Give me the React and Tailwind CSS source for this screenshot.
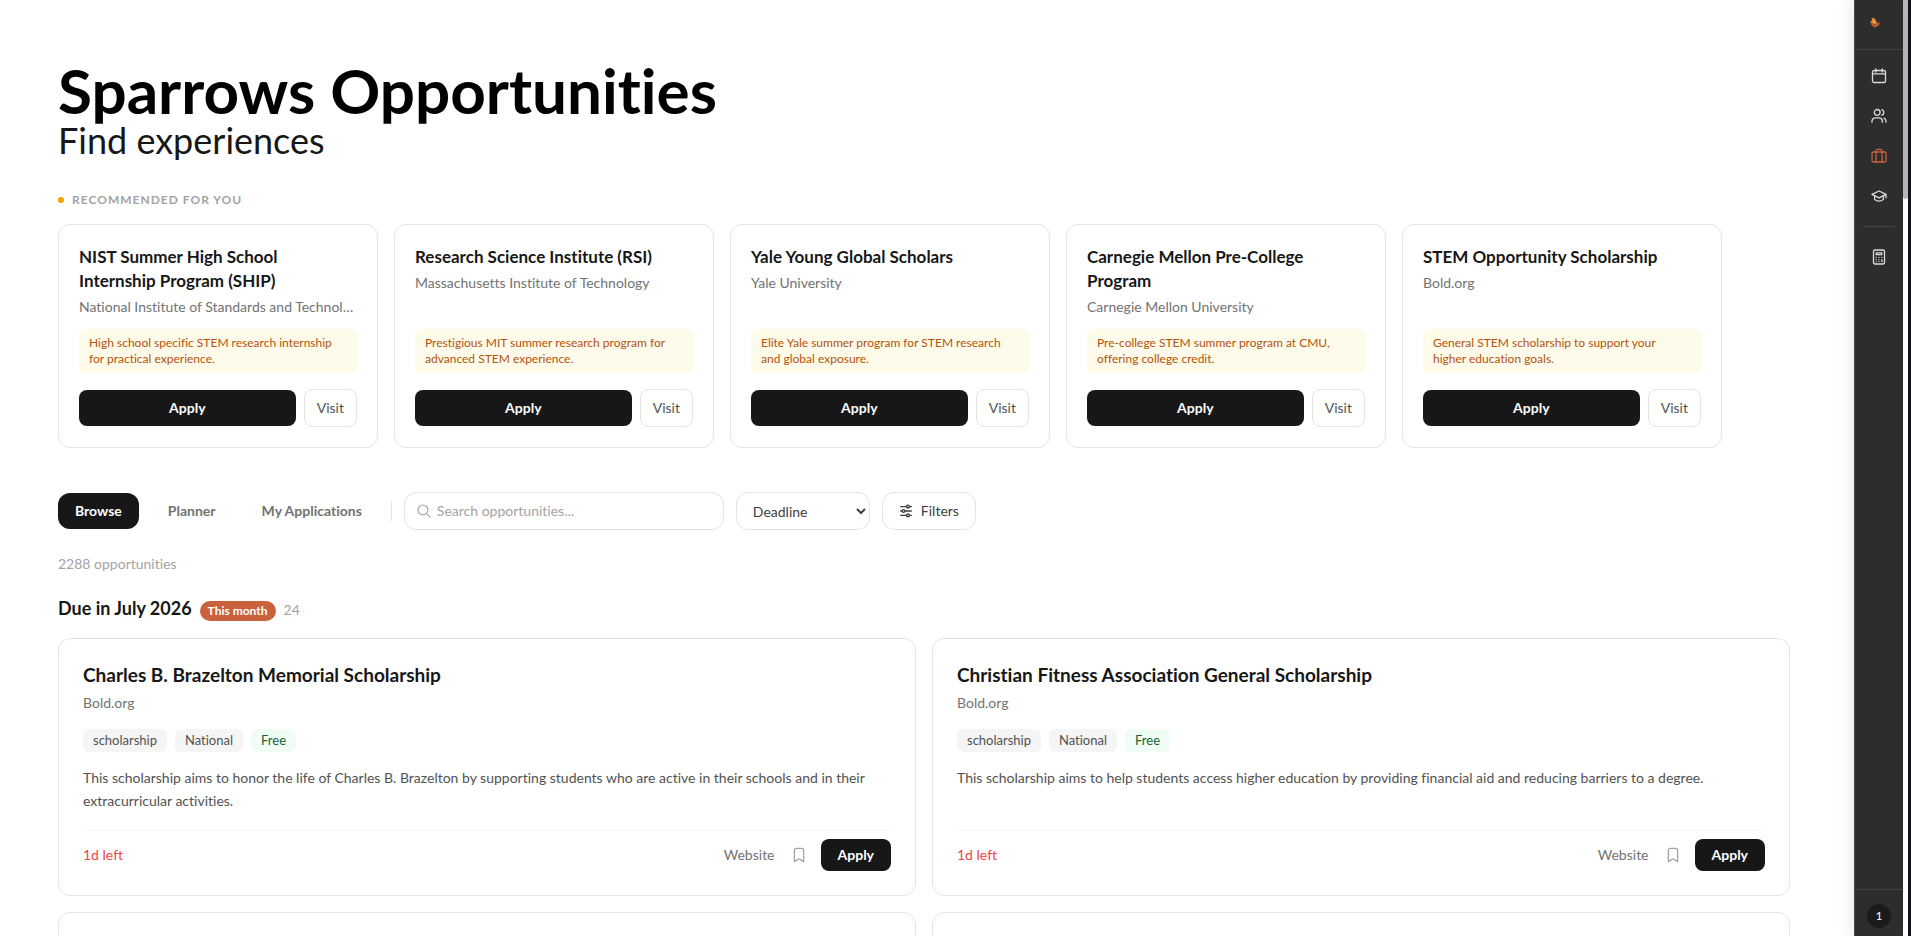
import React, { useState } from "react";

const recommended = [
  {
    id: 1,
    title: "NIST Summer High School Internship Program (SHIP)",
    org: "National Institute of Standards and Technology",
    reason: "High school specific STEM research internship for practical experience.",
  },
  {
    id: 2,
    title: "Research Science Institute (RSI)",
    org: "Massachusetts Institute of Technology",
    reason: "Prestigious MIT summer research program for advanced STEM experience.",
  },
  {
    id: 3,
    title: "Yale Young Global Scholars",
    org: "Yale University",
    reason: "Elite Yale summer program for STEM research and global exposure.",
  },
  {
    id: 4,
    title: "Carnegie Mellon Pre-College Program",
    org: "Carnegie Mellon University",
    reason: "Pre-college STEM summer program at CMU, offering college credit.",
  },
  {
    id: 5,
    title: "STEM Opportunity Scholarship",
    org: "Bold.org",
    reason: "General STEM scholarship to support your higher education goals.",
  },
];

const opportunities = [
  {
    id: 1,
    title: "Charles B. Brazelton Memorial Scholarship",
    org: "Bold.org",
    tags: ["scholarship", "National"],
    description:
      "This scholarship aims to honor the life of Charles B. Brazelton by supporting students who are active in their schools and in their extracurricular activities.",
    left: "1d left",
  },
  {
    id: 2,
    title: "Christian Fitness Association General Scholarship",
    org: "Bold.org",
    tags: ["scholarship", "National"],
    description:
      "This scholarship aims to help students access higher education by providing financial aid and reducing barriers to a degree.",
    left: "1d left",
  },
];

const tabs = ["Browse", "Planner", "My Applications"];

const Icon = ({ children, className = "size-4", strokeWidth = 1.3 }) => (
  <svg
    viewBox="0 0 16 16"
    fill="none"
    stroke="currentColor"
    strokeWidth={strokeWidth}
    strokeLinecap="round"
    strokeLinejoin="round"
    aria-hidden="true"
    className={className}
  >
    {children}
  </svg>
);

const navItems = [
  {
    label: "Calendar",
    icon: (
      <>
        <rect x="1.5" y="2.5" width="13" height="12" rx="1.6" />
        <path d="M1.5 5.8h13M4.8 1v3M11.2 1v3" />
      </>
    ),
  },
  {
    label: "People",
    icon: (
      <>
        <circle cx="6.2" cy="4.4" r="2.9" />
        <path d="M1 14.2v-1a3.4 3.4 0 0 1 3.4-3.4H8a3.4 3.4 0 0 1 3.4 3.4v1M10.8 1.7a2.8 2.8 0 0 1 0 5.4M13 10.2a3.2 3.2 0 0 1 2 3v1" />
      </>
    ),
  },
  {
    label: "Opportunities",
    active: true,
    icon: (
      <>
        <rect x="1" y="4" width="14" height="10" rx="1.5" />
        <path d="M5 14V3a1.6 1.6 0 0 1 1.6-1.6h2.8A1.6 1.6 0 0 1 11 3v11" />
      </>
    ),
  },
  {
    label: "Colleges",
    icon: (
      <>
        <path d="M1 6.4 8 3l7 3.4-7 3.4-7-3.4ZM15 6.4v3.4" />
        <path d="M3.6 8v3.4c1.2 1.2 2.6 1.8 4.4 1.8s3.2-.6 4.4-1.8V8" />
      </>
    ),
  },
];

const Sidebar = () => (
  <aside className="relative z-10 flex w-[49px] shrink-0 flex-col items-center border-l border-[#4a4a4a] bg-[#2d2d2d] text-[#dcdcdc] shadow-[-4px_0_14px_rgba(0,0,0,0.08)]">
    <a
      href="#home"
      aria-label="Sparrows home"
      className="flex h-[50px] w-full items-start justify-center border-b border-[#454545] pt-4 pr-2"
    >
      <svg viewBox="0 0 12 12" className="size-3" aria-hidden="true">
        <path d="M1.6 5.2 3 4.6 2.6 2.4 4.6 1.4 6.6 3.6 7.4 6l3.6 1.2-2 2.4-3.2 1.8L3 9.6 1.4 7Z" fill="#d97a35" />
        <path d="M3.4 2.6 6 5.4 6.6 7.2 4.2 6.4Z" fill="#f8b04a" />
        <path d="M1.8 7.2 5.6 9.2 10.4 6.8M3.6 10.6 6.2 10" stroke="#7a3a20" strokeWidth="0.9" fill="none" />
      </svg>
    </a>
    <nav className="flex w-full flex-col items-center pt-1.5">
      {navItems.map((item) => (
        <a
          key={item.label}
          href={`#${item.label.toLowerCase()}`}
          aria-label={item.label}
          className={`flex size-10 items-center justify-center ${item.active ? "text-[#c9613d]" : ""}`}
        >
          <Icon>{item.icon}</Icon>
        </a>
      ))}
      <hr className="my-2.5 w-8 border-[#454545]" />
      <a href="#calculator" aria-label="Calculator" className="flex size-10 items-center justify-center">
        <Icon>
          <rect x="2.5" y="1" width="11" height="14" rx="1.4" />
          <path d="M5.2 3.8h5.6v1.8H5.2zM5.2 8.4v0M8 8.4v0M10.8 8.4v0M5.2 10.6v0M8 10.6v0M5.2 12.6v0M8 12.6v0M10.8 10.6v2" />
        </Icon>
      </a>
    </nav>
    <div className="mt-auto flex h-[47px] w-full items-center justify-center border-t border-[#454545] pt-1.5">
      <button
        type="button"
        aria-label="Notifications"
        className="flex size-6 items-center justify-center rounded-full bg-[#1c1a1a] text-xs text-white"
      >
        1
      </button>
    </div>
  </aside>
);

const RecommendedCard = ({ item }) => (
  <article className="flex w-80 shrink-0 flex-col rounded-xl border border-[#e5e5e5] bg-white p-5">
    <h3 className="text-[17px] leading-6 font-bold text-[#171717]">{item.title}</h3>
    <p className="mt-1 truncate text-sm text-[#737373]">{item.org}</p>
    <div className="mt-auto pt-3">
      <p className="rounded-md bg-[#fffbeb] px-2.5 py-1.5 text-xs text-[#b45309]">{item.reason}</p>
    </div>
    <div className="mt-4 flex items-center gap-2">
      <button type="button" className="h-9 flex-1 rounded-lg bg-[#171717] text-sm font-bold text-white">
        Apply
      </button>
      <a
        href="#visit"
        className="flex h-[38px] items-center rounded-lg border border-[#e5e5e5] px-3 text-sm text-[#525252]"
      >
        Visit
      </a>
    </div>
  </article>
);

const OpportunityCard = ({ item }) => (
  <article className="flex flex-col rounded-xl border border-[#e5e5e5] bg-white p-6">
    <h3 className="text-[19px] leading-6 font-bold text-[#171717]">{item.title}</h3>
    <p className="mt-1.5 text-sm text-[#737373]">{item.org}</p>
    <div className="mt-4 flex gap-2 text-[13px] leading-[23px]">
      {item.tags.map((tag) => (
        <span key={tag} className="rounded-md bg-[#f5f5f5] px-2.5 text-[#525252]">
          {tag}
        </span>
      ))}
      <span className="rounded-md bg-[#f0fdf4] px-2.5 text-[#166534]">Free</span>
    </div>
    <p className="mt-3.5 mb-4.5 text-sm leading-[23px] text-[#525252]">{item.description}</p>
    <div className="mt-auto flex items-center border-t border-[#f5f5f5] pt-2 text-sm">
      <span className="text-[#ef4444]">{item.left}</span>
      <a href="#website" className="ml-auto text-[#737373]">
        Website
      </a>
      <button type="button" aria-label="Save" className="mr-3.5 ml-4 flex size-4 items-center justify-center text-[#a3a3a3]">
        <Icon>
          <path d="M3.4 14.6V3.4a2 2 0 0 1 2-2h5.2a2 2 0 0 1 2 2v11.2L8 11.8l-4.6 2.8Z" />
        </Icon>
      </button>
      <button type="button" className="h-8 rounded-lg bg-[#171717] px-[17px] font-bold text-white">
        Apply
      </button>
    </div>
  </article>
);

const App = () => {
  const [tab, setTab] = useState("Browse");
  const [search, setSearch] = useState("");
  const [sort, setSort] = useState("deadline");

  return (
    <div className="flex h-screen overflow-hidden bg-white font-[Lato,sans-serif] [font-variant-ligatures:no-common-ligatures]">
      <main className="min-w-0 flex-1 overflow-hidden pt-[60px] pr-16 pl-[58px]">
        <h1 className="text-[62px] leading-[60px] font-bold text-black">Sparrows Opportunities</h1>
        <p className="text-4xl text-[#171717]">Find experiences</p>

        <section>
          <h2 className="mt-8 mb-4 flex items-center gap-2 text-xs font-bold tracking-[1px] text-[#a3a3a3] uppercase">
            <span className="size-1.5 rounded-full bg-[#f59e0b]" />
            Recommended for you
          </h2>
          <div className="flex gap-4 overflow-hidden">
            {recommended.map((item) => (
              <RecommendedCard key={item.id} item={item} />
            ))}
          </div>
        </section>

        <div className="mt-11 flex items-center gap-3 text-sm">
          {tabs.map((name) => (
            <button
              key={name}
              type="button"
              onClick={() => setTab(name)}
              className={`h-9 rounded-xl px-[17px] font-bold ${tab === name ? "bg-[#171717] text-white" : "text-[#737373]"}`}
            >
              {name}
            </button>
          ))}
          <div className="h-5 w-px bg-[#e5e5e5]" />
          <label className="flex h-[38px] w-80 items-center gap-1.5 rounded-xl border border-[#e5e5e5] px-3 text-[#a3a3a3]">
            <Icon className="size-3.5 shrink-0">
              <circle cx="6.8" cy="6.8" r="5.6" />
              <path d="m11 11 4 4" />
            </Icon>
            <input
              type="text"
              aria-label="Search opportunities"
              value={search}
              onChange={(e) => setSearch(e.target.value)}
              placeholder="Search opportunities..."
              className="w-full bg-transparent text-[#171717] outline-none placeholder:text-[#a3a3a3]"
            />
          </label>
          <select
            aria-label="Sort by"
            value={sort}
            onChange={(e) => setSort(e.target.value)}
            className="h-[38px] w-[134px] rounded-xl border border-[#e5e5e5] bg-white px-3 text-[#404040]"
          >
            <option value="deadline">Deadline</option>
            <option value="newest">Newest</option>
          </select>
          <button
            type="button"
            className="flex h-[38px] items-center gap-2 rounded-xl border border-[#e5e5e5] px-4 text-[#404040]"
          >
            <Icon className="size-3.5" strokeWidth={1.6}>
              <path d="M2 3h6.4M12 3h2M2 8h1.4M7 8h7M2 13h6.4M12 13h2" />
              <circle cx="10.2" cy="3" r="1.6" />
              <circle cx="5.2" cy="8" r="1.6" />
              <circle cx="10.2" cy="13" r="1.6" />
            </Icon>
            Filters
          </button>
        </div>

        <p className="mt-6 text-sm text-[#a3a3a3]">2288 opportunities</p>

        <section>
          <div className="mt-5 mb-4 flex items-baseline gap-2">
            <h2 className="text-lg leading-7 font-bold text-[#171717]">Due in July 2026</h2>
            <span className="rounded-full bg-[#c9613d] px-2 text-xs leading-5 font-bold text-white">This month</span>
            <span className="text-sm text-[#a3a3a3]">24</span>
          </div>
          <div className="grid grid-cols-2 gap-4">
            {opportunities.map((item) => (
              <OpportunityCard key={item.id} item={item} />
            ))}
            <article className="h-64 rounded-xl border border-[#e5e5e5] bg-white" />
            <article className="h-64 rounded-xl border border-[#e5e5e5] bg-white" />
          </div>
        </section>
      </main>

      <Sidebar />

      {/* page scroll track */}
      <div className="w-[5px] shrink-0 bg-white">
        <div className="h-[199px] rounded-b-full bg-[#b9b7b9]" />
      </div>
      <div className="w-[3px] shrink-0 bg-[#0d151d]" />
    </div>
  );
};

export default App;
